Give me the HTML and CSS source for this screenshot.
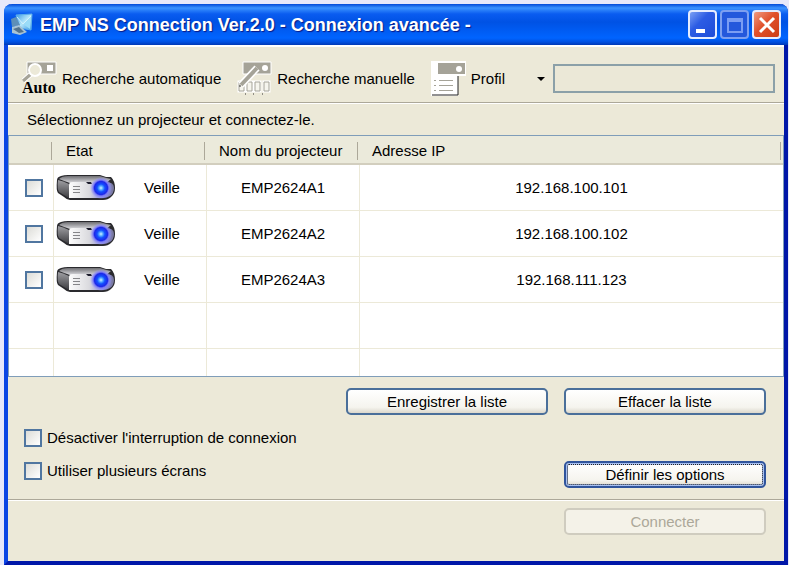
FILE: index.html
```html
<!DOCTYPE html>
<html lang="fr">
  <head>
    <meta charset="UTF-8" />
    <meta name="viewport" content="width=device-width, initial-scale=1.0" />
    <title>EMP NS Connection</title>
    <link rel="stylesheet" href="styles.css">
  </head>
  <body>
    <svg width="0" height="0" class="defs" aria-hidden="true">
      <defs>
        <linearGradient id="caseTop" x1="0" y1="0" x2="0" y2="1">
          <stop offset="0" stop-color="#6f6f73" />
          <stop offset="1" stop-color="#dcdce0" />
        </linearGradient>
        <linearGradient id="caseSide" x1="0" y1="0" x2="0" y2="1">
          <stop offset="0" stop-color="#a0a0a4" />
          <stop offset="1" stop-color="#3c3c40" />
        </linearGradient>
        <linearGradient id="caseFront" x1="0" y1="0" x2="1" y2="0">
          <stop offset="0" stop-color="#fcfcfc" />
          <stop offset="0.45" stop-color="#dadade" />
          <stop offset="0.75" stop-color="#8a8ae0" />
          <stop offset="1" stop-color="#77779a" />
        </linearGradient>
        <radialGradient id="lens">
          <stop offset="0" stop-color="#d0f4ff" />
          <stop offset="0.2" stop-color="#4aa0ff" />
          <stop offset="0.35" stop-color="#1450ff" />
          <stop offset="0.6" stop-color="#1c28e8" />
          <stop offset="0.72" stop-color="#7c7cf4" />
          <stop offset="1" stop-color="#a4a4f4" stop-opacity="0" />
        </radialGradient>
        <linearGradient id="screen" x1="0" y1="0" x2="1" y2="1">
          <stop offset="0" stop-color="#3c9ae4" />
          <stop offset="0.5" stop-color="#b4e6fa" />
          <stop offset="1" stop-color="#3a9be6" />
        </linearGradient>
        <symbol id="projector" viewBox="0 0 60 28">
          <path d="M1 6 Q1 3 5 2 Q8 1 12 1 H44 Q47 2 50 3 H55 Q59 7 59 14 Q59 20 55 23 Q52 26 47 26 H14 Q11 26 8 23 L2 19 Q0 17 1 6 Z" fill="#2a2a2e" />
          <path d="M2 6 Q7 7 13 10 V24 L3 18 Q1 15 2 6 Z" fill="url(#caseSide)" />
          <path d="M3 5 Q6 2 12 2 H44 Q50 4 55 5 L50 9 H14 Q8 7 3 5 Z" fill="url(#caseTop)" />
          <path d="M13 11 Q13 8 17 8 H50 Q58 8 58 14 Q58 19 54 22 Q51 24 47 24 H13 Z" fill="url(#caseFront)" />
          <path d="M17 12.500 H24 M17 15.500 H24 M17 18.500 H24" stroke="#858588" />
          <path d="M30 8 H35 L36 10 H32 Z" fill="#1c1c2c" />
          <circle cx="45" cy="14" r="11" fill="url(#lens)" />
        </symbol>
      </defs>
    </svg>

    <div class="window">
      <header class="titlebar">
        <svg class="app-icon" width="24" height="24" viewBox="0 0 24 24" aria-hidden="true">
          <path d="M6 2 L22 1 L21 17 L10 15 Z" fill="url(#screen)" stroke="#5cb0ec" />
          <path d="M21 3 L13 11 L20 16 Z" fill="#9adcf8" />
          <path d="M7 4 L13 11 L21 3" fill="none" stroke="#d4f1fc" />
          <path d="M1 6 L6 4 L10 12 L2 14 Z" fill="#5d8fb8" />
          <path d="M2 14 L9 12 L17 19 L10 22 L2 20 Z" fill="#a9c4d4" />
          <path d="M3 16 L9 14 L14 19 L9 20 Z" fill="#54738c" />
        </svg>
        <h1>EMP NS Connection Ver.2.0 - Connexion avancée -</h1>
        <div class="window-buttons">
          <button class="window-button" aria-label="Réduire">
            <svg width="28" height="28" viewBox="0 0 28 28"><path d="M7 18 H16 V22 H7 Z" fill="#fff" /></svg>
          </button>
          <button class="window-button inactive" aria-label="Agrandir" disabled>
            <svg width="28" height="28" viewBox="0 0 28 28"><path d="M7 8 H21 V21 H7 Z M7 10 H21" fill="none" stroke="#7b9df3" stroke-width="2" /></svg>
          </button>
          <button class="window-button close" aria-label="Fermer">
            <svg width="28" height="28" viewBox="0 0 28 28"><path d="M7 7 L21 21 M21 7 L7 21" stroke="#fff" stroke-width="3" /></svg>
          </button>
        </div>
      </header>

      <div class="toolbar">
        <button class="tool">
          <svg width="36" height="36" viewBox="0 0 36 36" aria-hidden="true">
            <path d="M5 1 H34 V13 H5 Z" fill="#a5a398" stroke="#fff" />
            <path d="M25 4 H31 V10 H25 Z" fill="#fff" />
            <path d="M9 13 L1 20" stroke="#fff" stroke-width="5" />
            <path d="M9 13 L1 20" stroke="#a5a398" stroke-width="3" />
            <circle cx="13" cy="9" r="6" fill="#ece9d8" stroke="#fff" stroke-width="2" />
            <text x="0" y="32" class="auto">Auto</text>
          </svg>
          Recherche automatique
        </button>
        <button class="tool manual">
          <svg width="36" height="36" viewBox="0 0 36 36" aria-hidden="true">
            <path d="M6 1 H34 V13 H6 Z" fill="#a5a398" stroke="#fff" />
            <circle cx="28" cy="7" r="3" fill="#fff" />
            <path d="M2 21 H7 V30 H2 Z M10 21 H15 V30 H10 Z M18 21 H23 V30 H18 Z M27 21 H32 V30 H27 Z" fill="#ece9d8" stroke="#fff" stroke-width="3" />
            <path d="M2 21 H7 V30 H2 Z M10 21 H15 V30 H10 Z M18 21 H23 V30 H18 Z M27 21 H32 V30 H27 Z" fill="#f6f5ee" stroke="#a5a398" />
            <path d="M20 7 L4 24" stroke="#fff" stroke-width="7" />
            <path d="M20 7 L4 24" stroke="#a5a398" stroke-width="4" />
            <path d="M2 25 h2 M8 33 h1 M16 33 h1 M25 33 h1" stroke="#333" />
          </svg>
          Recherche manuelle
        </button>
        <button class="tool profile">
          <svg width="36" height="36" viewBox="0 0 36 36" aria-hidden="true">
            <path d="M0 0 H35 V15 H27 V35 H0 Z" fill="#fff" />
            <path d="M1 34 H27 V15" fill="none" stroke="#222" />
            <path d="M7 2 H34 V13 H7 Z" fill="#a5a398" />
            <circle cx="28" cy="8" r="3" fill="#fff" />
            <path d="M3 19.500 h2 M3 24.500 h2 M3 29.500 h2 M8 19.500 H22 M8 24.500 H22 M8 29.500 H22" stroke="#a5a398" />
          </svg>
          Profil
          <svg class="arrow" width="8" height="4" viewBox="0 0 8 4" aria-hidden="true"><path d="M0 0 H8 L4 4 Z" /></svg>
        </button>
        <input class="profile-name" type="text" aria-label="Profil" disabled />
      </div>

      <p class="prompt">Sélectionnez un projecteur et connectez-le.</p>

      <table class="projectors">
        <thead>
          <tr>
            <th class="col-check"></th>
            <th class="col-state">Etat</th>
            <th class="col-name">Nom du projecteur</th>
            <th>Adresse IP</th>
          </tr>
        </thead>
        <tbody>
          <tr>
            <td><input type="checkbox" aria-label="EMP2624A1" /></td>
            <td><div class="state"><svg width="60" height="28" aria-hidden="true"><use href="#projector" /></svg>Veille</div></td>
            <td>EMP2624A1</td>
            <td>192.168.100.101</td>
          </tr>
          <tr>
            <td><input type="checkbox" aria-label="EMP2624A2" /></td>
            <td><div class="state"><svg width="60" height="28" aria-hidden="true"><use href="#projector" /></svg>Veille</div></td>
            <td>EMP2624A2</td>
            <td>192.168.100.102</td>
          </tr>
          <tr>
            <td><input type="checkbox" aria-label="EMP2624A3" /></td>
            <td><div class="state"><svg width="60" height="28" aria-hidden="true"><use href="#projector" /></svg>Veille</div></td>
            <td>EMP2624A3</td>
            <td>192.168.111.123</td>
          </tr>
          <tr><td></td><td></td><td></td><td></td></tr>
          <tr class="partial"><td></td><td></td><td></td><td></td></tr>
        </tbody>
      </table>

      <div class="options">
        <div class="list-actions">
          <button class="btn">Enregistrer la liste</button>
          <button class="btn">Effacer la liste</button>
        </div>
        <div class="settings">
          <div class="checks">
            <label><input type="checkbox" /> Désactiver l'interruption de connexion</label>
            <label><input type="checkbox" /> Utiliser plusieurs écrans</label>
          </div>
          <button class="btn focused">Définir les options</button>
        </div>
      </div>

      <footer>
        <button class="btn" disabled>Connecter</button>
      </footer>
    </div>
  </body>
</html>
```
FILE: styles.css
```css
* {
  box-sizing: border-box;
}
body {
  margin: 0;
  padding: 4px 1px 0 4px;
  min-height: 100vh;
  display: flex;
  background-color: #e6e8fa;
  font-family: "Liberation Sans", Arial, sans-serif;
  font-size: 15px;
  line-height: 20px;
  color: #000;
}
.defs {
  position: absolute;
}
button,
input {
  font: inherit;
  color: inherit;
  margin: 0;
}
.window {
  flex: 1;
  display: flex;
  flex-direction: column;
  border: 4px solid #0a45e4;
  border-top: 0;
  border-right-color: #0017a8;
  border-bottom-color: #0017a8;
  border-radius: 8px 8px 0 0;
  background-color: #ece9d8;
}
.titlebar {
  display: flex;
  align-items: center;
  gap: 6px;
  height: 41px;
  margin: 0 -4px;
  padding: 0 7px 0 6px;
  border-radius: 8px 8px 0 0;
  background: linear-gradient(#0048d8 0, #3a92ff 4px, #0a5cf0 10px, #0052e4 18px, #0064ff 34px, #0050e0 38px, #0038b4 41px);
}
h1 {
  flex: 1;
  margin: 0;
  font-size: 18px;
  line-height: 24px;
  color: #fff;
  text-shadow: 1px 1px 1px #0a1883;
  white-space: nowrap;
}
.window-buttons {
  display: flex;
  gap: 3px;
}
.window-button {
  width: 29px;
  height: 29px;
  padding: 0;
  display: flex;
  align-items: center;
  justify-content: center;
  border: 2px solid #e4ecff;
  border-radius: 4px;
  background: linear-gradient(135deg, #7ba0f4, #2c5ce4 40%, #1c4bd8);
}
.window-button svg {
  flex: none;
}
.window-button.inactive {
  border-color: #7d9ff0;
  background: #2458dc;
}
.window-button.close {
  background: linear-gradient(135deg, #f09a80, #e0512c 45%, #cc3c14);
}
.toolbar {
  display: flex;
  align-items: center;
  height: 58px;
  padding: 8px 9px 0 14px;
  border-top: 2px solid #fff;
  border-bottom: 1px solid #aca899;
}
.tool {
  display: flex;
  align-items: center;
  gap: 4px;
  padding: 0;
  border: 0;
  background: none;
  white-space: nowrap;
}
.auto {
  font-family: "Liberation Serif", serif;
  font-size: 16px;
  font-weight: bold;
}
.manual,
.profile {
  margin-left: 16px;
}
.arrow {
  margin-left: 28px;
}
.profile-name {
  flex: 1;
  min-width: 0;
  height: 29px;
  margin-left: 8px;
  border: 2px solid #8ba0a8;
  background-color: #ebe8d7;
}
.prompt {
  margin: 0;
  padding: 6px 19px 5px;
  border-top: 1px solid #fff;
}
.projectors {
  width: 100%;
  table-layout: fixed;
  border-collapse: separate;
  border-spacing: 0;
  border: 1px solid #7f9db9;
  background-color: #fff;
}
th {
  height: 29px;
  padding: 2px 12px 0;
  text-align: left;
  font-weight: normal;
  border-bottom: 2px solid #d2cebe;
  background-color: #ebeadb;
  background-image: linear-gradient(#aca899, #aca899);
  background-size: 1px 18px;
  background-position: right 2px top 6px;
  background-repeat: no-repeat;
}
.col-check {
  width: 45px;
}
.col-state,
.col-name {
  width: 153px;
}
td {
  height: 46px;
  padding: 0;
  text-align: center;
  border-right: 1px solid #ece9d8;
  border-bottom: 1px solid #ece9d8;
}
td:last-child {
  border-right: 0;
}
.partial td {
  height: 27px;
  border-bottom: 0;
}
.state {
  display: flex;
  align-items: center;
  gap: 28px;
  padding-left: 2px;
}
input[type="checkbox"] {
  appearance: none;
  display: block;
  width: 18px;
  height: 18px;
  border: 2px solid #5076a0;
  background: linear-gradient(135deg, #dcdcd7, #fff);
}
td input[type="checkbox"] {
  margin: 0 auto 0 16px;
}
.options {
  padding: 11px 18px 11px 16px;
  border-bottom: 1px solid #aca899;
}
.list-actions {
  display: flex;
  justify-content: flex-end;
  gap: 16px;
}
.btn {
  width: 202px;
  height: 27px;
  padding: 0;
  border: 2px solid #4a6f9a;
  border-radius: 5px;
  background: linear-gradient(#fff, #f5f4ee 75%, #dcd8cc);
}
.btn.focused {
  border-color: #2f549c;
  box-shadow: inset 0 0 0 2px #a8c0f0;
  outline: 1px dotted #222;
  outline-offset: -4px;
}
.btn:disabled {
  border-color: #cfccbf;
  background: #f4f2e8;
  color: #aca899;
}
.settings {
  display: flex;
  justify-content: space-between;
  align-items: flex-end;
}
.checks {
  display: flex;
  flex-direction: column;
  gap: 13px;
  padding: 13px 0 7px;
}
.checks label {
  display: flex;
  align-items: center;
  gap: 5px;
}
footer {
  flex: 1;
  display: flex;
  justify-content: flex-end;
  align-items: flex-start;
  padding: 7px 18px;
  border-top: 1px solid #fff;
}
```
